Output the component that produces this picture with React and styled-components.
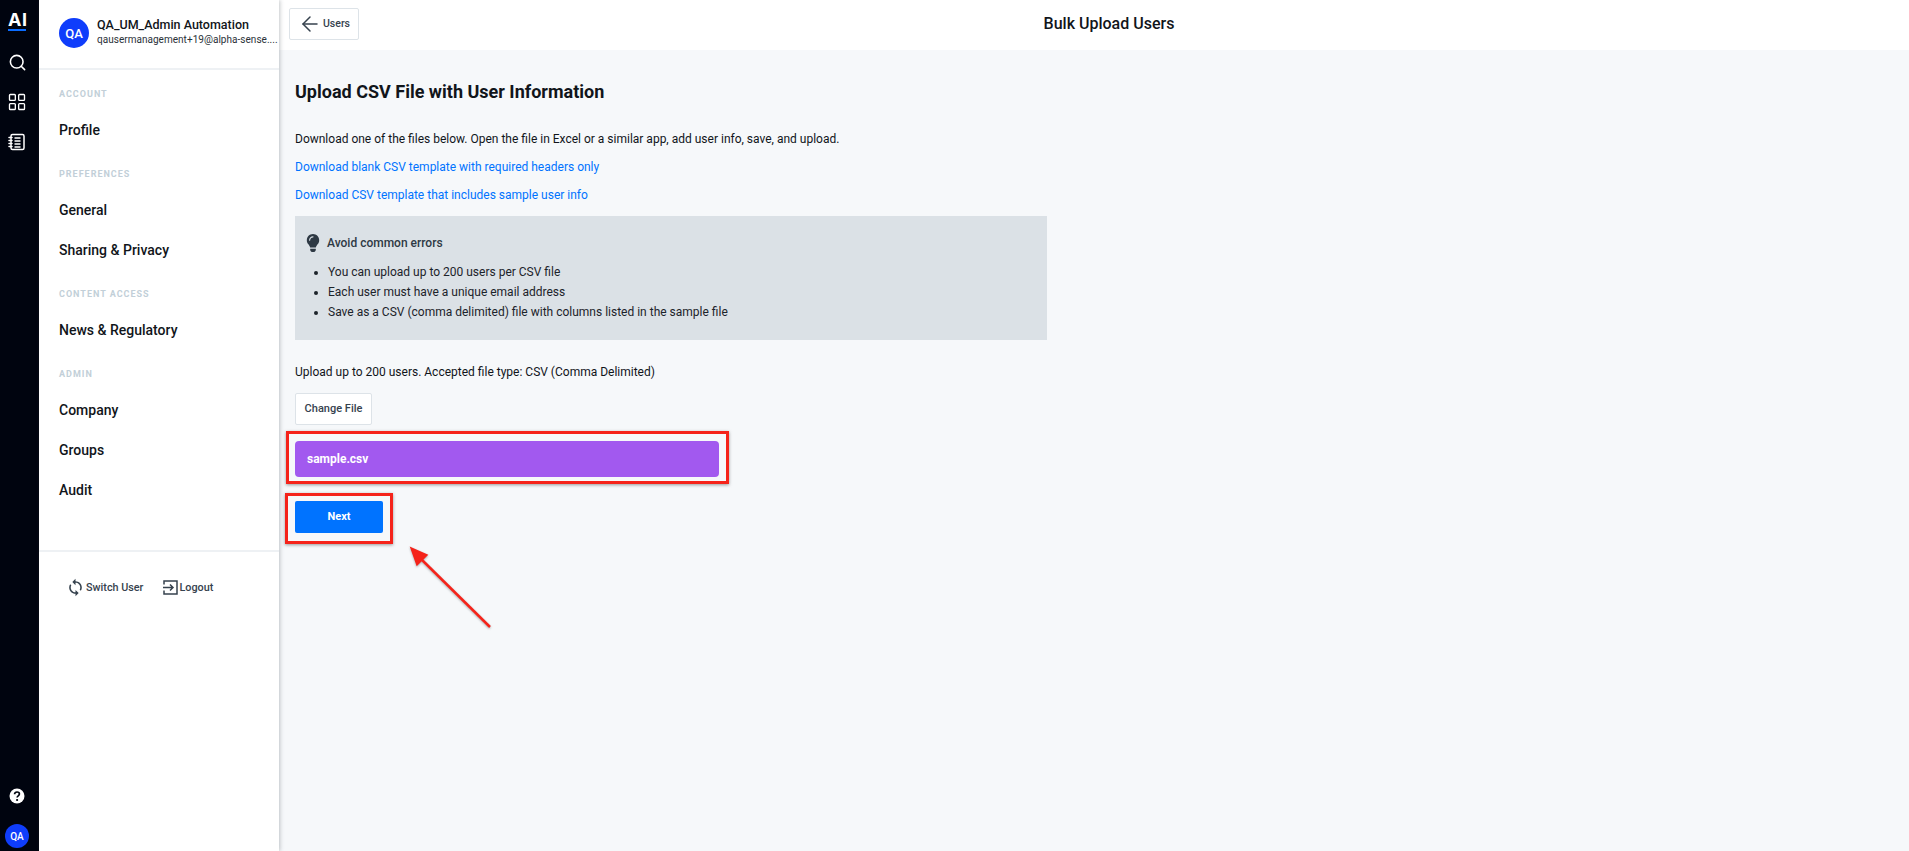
import styled, { createGlobalStyle } from "styled-components";
import { ArrowLeft, LayoutGrid, Search } from "lucide-react";
import { FaLightbulb } from "react-icons/fa";
import { MdSync } from "react-icons/md";

const sections = [
  { label: "ACCOUNT", items: ["Profile"] },
  { label: "PREFERENCES", items: ["General", "Sharing & Privacy"] },
  { label: "CONTENT ACCESS", items: ["News & Regulatory"] },
  { label: "ADMIN", items: ["Company", "Groups", "Audit"] },
];

const tips = [
  "You can upload up to 200 users per CSV file",
  "Each user must have a unique email address",
  "Save as a CSV (comma delimited) file with columns listed in the sample file",
];

export default function App() {
  return (
    <Page>
      <GlobalStyle />
      <Rail>
        <Logo>AI</Logo>
        <RailIcon>
          <Search size={19} strokeWidth={2} />
        </RailIcon>
        <RailIcon>
          <LayoutGrid size={20} strokeWidth={1.6} />
        </RailIcon>
        <RailIcon>
          <NotebookIcon />
        </RailIcon>
        <RailBottom>
          <HelpIcon />
          <RailAvatar>QA</RailAvatar>
        </RailBottom>
      </Rail>

      <Sidebar>
        <UserBlock>
          <Avatar>QA</Avatar>
          <UserText>
            <UserName>QA_UM_Admin Automation</UserName>
            <UserEmail>qausermanagement+19@alpha-sense....</UserEmail>
          </UserText>
        </UserBlock>
        <Menu>
          {sections.map((section) => (
            <div key={section.label}>
              <SectionLabel>{section.label}</SectionLabel>
              {section.items.map((item) => (
                <MenuItem key={item}>{item}</MenuItem>
              ))}
            </div>
          ))}
        </Menu>
        <FooterLinks>
          <FooterLink>
            <MdSync size={19} />
            Switch User
          </FooterLink>
          <FooterLink>
            <LogoutIcon />
            Logout
          </FooterLink>
        </FooterLinks>
      </Sidebar>

      <Main>
        <TopBar>
          <BackButton>
            <ArrowLeft size={24} strokeWidth={1.5} />
            <BackLabel>Users</BackLabel>
          </BackButton>
          <PageTitle>Bulk Upload Users</PageTitle>
        </TopBar>
        <Content>
          <Heading>Upload CSV File with User Information</Heading>
          <BodyText>
            Download one of the files below. Open the file in Excel or a similar
            app, add user info, save, and upload.
          </BodyText>
          <DownloadLink>Download blank CSV template with required headers only</DownloadLink>
          <DownloadLink>Download CSV template that includes sample user info</DownloadLink>
          <TipBox>
            <TipTitle>
              <FaLightbulb size={18} />
              Avoid common errors
            </TipTitle>
            <TipList>
              {tips.map((tip) => (
                <li key={tip}>{tip}</li>
              ))}
            </TipList>
          </TipBox>
          <UploadNote>Upload up to 200 users. Accepted file type: CSV (Comma Delimited)</UploadNote>
          <ChangeButton>Change File</ChangeButton>
          <FileMark>
            <FileBar>sample.csv</FileBar>
          </FileMark>
          <NextMark>
            <NextButton>Next</NextButton>
          </NextMark>
          <CalloutArrow />
        </Content>
      </Main>
    </Page>
  );
}

function NotebookIcon() {
  return (
    <svg width="20" height="20" viewBox="0 0 20 20" fill="none" stroke="currentColor" strokeWidth="1.5">
      <rect x="4" y="2.5" width="13" height="15" rx="1.5" />
      <path d="M2 5.5h3M2 8.5h3M2 11.5h3M2 14.5h3" strokeLinecap="round" />
      <path d="M7.5 6h6M7.5 9h6M7.5 12h6M7.5 15h6" />
    </svg>
  );
}

function HelpIcon() {
  return (
    <svg width="16" height="16" viewBox="0 0 16 16">
      <circle cx="8" cy="8" r="7.5" fill="#fff" />
      <path
        d="M5.6 6.2c0-1.4 1-2.2 2.4-2.2s2.4.8 2.4 2c0 1.9-2.3 1.8-2.3 3.6"
        fill="none"
        stroke="#00040f"
        strokeWidth="1.7"
      />
      <circle cx="8.1" cy="12" r="1.1" fill="#00040f" />
    </svg>
  );
}

function LogoutIcon() {
  return (
    <svg width="15" height="15" viewBox="0 0 15 15" fill="none" stroke="currentColor" strokeWidth="1.5">
      <path d="M1 4.5V1h13v13H1v-3.5" />
      <path d="M0 7.5h10M7 4.5l3 3-3 3" />
    </svg>
  );
}

function CalloutArrow() {
  return (
    <ArrowSvg width="100" height="100" viewBox="0 0 100 100">
      <line x1="91" y1="88" x2="20" y2="18" stroke="#f5231a" strokeWidth="2.5" />
      <polygon points="12,9 28,16 18,26" fill="#f5231a" stroke="#f5231a" strokeWidth="1.5" />
    </ArrowSvg>
  );
}

const GlobalStyle = createGlobalStyle`
  html, body {
    margin: 0;
    height: 100%;
    font-family: Roboto, "Liberation Sans", sans-serif;
    color: #11151a;
  }
  * {
    box-sizing: border-box;
  }
`;

const Page = styled.div`
  display: flex;
  height: 851px;
  overflow: hidden;
`;

const Rail = styled.nav`
  width: 39px;
  flex-shrink: 0;
  padding-right: 5px;
  background: #00040f;
  color: #fff;
  display: flex;
  flex-direction: column;
  align-items: center;
`;

const Logo = styled.div`
  width: 18px;
  margin-top: 12px;
  height: 19px;
  font-family: Inter, sans-serif;
  font-size: 18px;
  font-weight: 700;
  line-height: 16px;
  letter-spacing: 0.5px;
  text-align: center;
  border-bottom: 2px solid #0a6cff;
  margin-bottom: 21px;
`;

const RailIcon = styled.div`
  width: 20px;
  height: 20px;
  margin-bottom: 20px;
  display: flex;
  align-items: center;
  justify-content: center;
`;

const RailBottom = styled.div`
  margin-top: auto;
  margin-bottom: 3px;
  display: flex;
  flex-direction: column;
  align-items: center;
  gap: 20px;
`;

const RailAvatar = styled.div`
  width: 24px;
  height: 24px;
  border-radius: 50%;
  background: #0f3dfb;
  font-size: 10px;
  font-weight: 500;
  display: flex;
  align-items: center;
  justify-content: center;
`;

const Sidebar = styled.aside`
  width: 240px;
  flex-shrink: 0;
  background: #fff;
  box-shadow: 1px 0 4px rgba(60, 70, 80, 0.3);
  z-index: 1;
`;

const UserBlock = styled.div`
  height: 70px;
  padding: 18px 4px 0 20px;
  display: flex;
  gap: 8px;
  border-bottom: 2px solid #eef1f4;
`;

const Avatar = styled.div`
  width: 30px;
  height: 30px;
  flex-shrink: 0;
  border-radius: 50%;
  background: #0f3dfb;
  color: #fff;
  font-size: 13px;
  font-weight: 500;
  display: flex;
  align-items: center;
  justify-content: center;
`;

const UserText = styled.div`
  min-width: 0;
  flex: 1;
`;

const UserName = styled.div`
  font-size: 12.5px;
  font-weight: 500;
  line-height: 15px;
  margin-top: -1px;
`;

const UserEmail = styled.div`
  font-size: 10px;
  line-height: 14px;
  margin-top: 1px;
  letter-spacing: 0.03px;
  color: #2a3138;
  white-space: nowrap;
`;

const Menu = styled.div`
  padding-bottom: 40px;
  border-bottom: 2px solid #eef1f4;
`;

const SectionLabel = styled.div`
  height: 20px;
  margin: 14px 0 6px;
  padding-left: 20px;
  font-size: 9px;
  font-weight: 700;
  line-height: 20px;
  letter-spacing: 1px;
  color: #c2cfd8;
`;

const MenuItem = styled.div`
  height: 40px;
  padding-left: 20px;
  font-size: 14px;
  font-weight: 500;
  line-height: 40px;
`;

const FooterLinks = styled.div`
  display: flex;
  padding: 23px 0 0 27px;
  gap: 20px;
`;

const FooterLink = styled.div`
  display: flex;
  align-items: center;
  gap: 1px;
  height: 24px;
  font-size: 10.8px;
  font-weight: 500;
  color: #36424e;
`;

const Main = styled.main`
  flex: 1;
  min-width: 0;
  background: #f6f8fa;
`;

const TopBar = styled.header`
  height: 50px;
  background: #fff;
  padding: 8px 50px 0 10px;
  display: flex;
`;

const BackButton = styled.button`
  width: 70px;
  height: 32px;
  padding: 0 0 0 8px;
  border: 1px solid #dde3e8;
  border-radius: 2px;
  background: #fff;
  color: #36424e;
  font: 500 10.5px Roboto, sans-serif;
  display: flex;
  align-items: center;
  gap: 1px;
`;

const BackLabel = styled.span`
  margin-bottom: 2px;
`;

const PageTitle = styled.h1`
  flex: 1;
  margin: 0;
  font-size: 16px;
  font-weight: 500;
  line-height: 32px;
  text-align: center;
`;

const Content = styled.section`
  position: relative;
  padding: 29px 16px 0;
`;

const Heading = styled.h2`
  margin: 0 0 24px;
  font-size: 18px;
  font-weight: 700;
  line-height: 26px;
`;

const BodyText = styled.p`
  margin: 0;
  font-size: 12px;
  line-height: 20px;
`;

const DownloadLink = styled.a`
  display: block;
  margin-top: 8px;
  font-size: 12px;
  line-height: 20px;
  color: #0073ff;
`;

const TipBox = styled.div`
  width: 752px;
  height: 124px;
  margin-top: 11px;
  padding: 17px 12px 0;
  background: #dbe1e6;
`;

const TipTitle = styled.div`
  display: flex;
  align-items: center;
  gap: 5px;
  height: 20px;
  margin-left: -3px;
  font-size: 12px;
  font-weight: 500;
  color: #2e3944;
`;

const TipList = styled.ul`
  margin: 9px 0 0;
  padding-left: 21px;
  font-size: 12px;
  line-height: 20px;
  color: #1c232a;
`;

const UploadNote = styled.p`
  margin: 22px 0 0;
  font-size: 12px;
  line-height: 20px;
`;

const ChangeButton = styled.button`
  display: block;
  width: 77px;
  height: 32px;
  margin-top: 11px;
  padding: 0 0 2px;
  border: 1px solid #dde3e8;
  border-radius: 2px;
  background: #fff;
  color: #36424e;
  font: 500 11px Roboto, sans-serif;
`;

const Marked = styled.div`
  position: relative;
  &::after {
    content: "";
    position: absolute;
    border: 3px solid #f5231a;
    box-shadow: 0 1px 3px rgba(60, 60, 60, 0.5);
    pointer-events: none;
  }
`;

const FileMark = styled(Marked)`
  width: 424px;
  margin-top: 16px;
  &::after {
    inset: -10px -10px -7px -9px;
  }
`;

const FileBar = styled.div`
  height: 36px;
  padding-left: 12px;
  border-radius: 4px;
  background: #a259ef;
  color: #fff;
  font-size: 12px;
  font-weight: 700;
  line-height: 37px;
`;

const NextMark = styled(Marked)`
  width: 88px;
  margin-top: 24px;
  &::after {
    inset: -8px -10px -11px -10px;
  }
`;

const NextButton = styled.button`
  display: block;
  width: 88px;
  height: 32px;
  padding: 0 0 2px;
  border: 0;
  border-radius: 2px;
  background: #0073ff;
  color: #fff;
  font: 700 11px Roboto, sans-serif;
`;

const ArrowSvg = styled.svg`
  position: absolute;
  left: 120px;
  top: 489px;
  filter: drop-shadow(0 1px 1px rgba(60, 60, 60, 0.4));
`;
